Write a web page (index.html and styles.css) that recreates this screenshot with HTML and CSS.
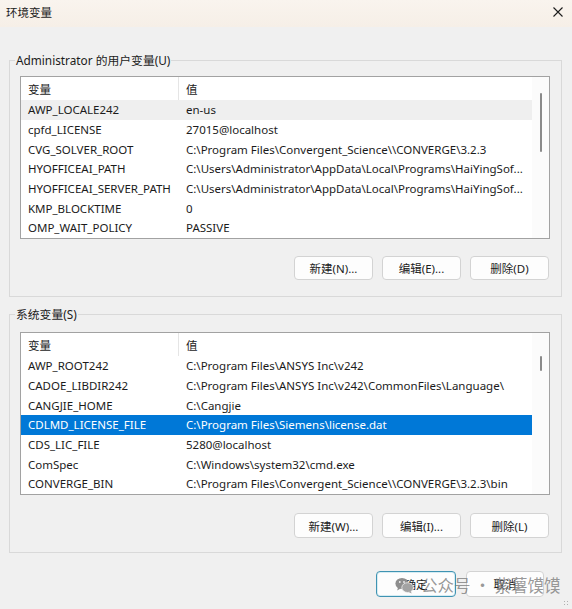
FILE: index.html
```html
<!DOCTYPE html>
<html lang="zh-CN">
<head>
<meta charset="utf-8">
<title>环境变量</title>
<link rel="stylesheet" href="styles.css">
</head>
<body>
<div class="window">
  <div class="titlebar">
    <span class="title">环境变量</span>
    <svg class="close" width="10" height="10" viewBox="0 0 10 10"><path d="M0.5 0.5 L9.5 9.5 M9.5 0.5 L0.5 9.5" stroke="#1c1c1c" stroke-width="1.1" fill="none"/></svg>
  </div>
  <div class="content">
    <fieldset class="group group-user">
      <legend>Administrator 的用户变量(U)</legend>
      <div class="list">
        <div class="list-main">
          <div class="row head"><div class="c1">变量</div><div class="c2">值</div></div>
          <div class="row hover"><div class="c1">AWP_LOCALE242</div><div class="c2">en-us</div></div>
          <div class="row"><div class="c1">cpfd_LICENSE</div><div class="c2">27015@localhost</div></div>
          <div class="row"><div class="c1">CVG_SOLVER_ROOT</div><div class="c2">C:\Program Files\Convergent_Science\\CONVERGE\3.2.3</div></div>
          <div class="row"><div class="c1">HYOFFICEAI_PATH</div><div class="c2">C:\Users\Administrator\AppData\Local\Programs\HaiYingSof...</div></div>
          <div class="row"><div class="c1">HYOFFICEAI_SERVER_PATH</div><div class="c2">C:\Users\Administrator\AppData\Local\Programs\HaiYingSof...</div></div>
          <div class="row"><div class="c1">KMP_BLOCKTIME</div><div class="c2">0</div></div>
          <div class="row"><div class="c1">OMP_WAIT_POLICY</div><div class="c2">PASSIVE</div></div>
        </div>
        <div class="scroll"><div class="thumb thumb-user"></div></div>
      </div>
      <div class="btns">
        <button class="btn">新建(N)...</button>
        <button class="btn">编辑(E)...</button>
        <button class="btn">删除(D)</button>
      </div>
    </fieldset>

    <fieldset class="group group-sys">
      <legend>系统变量(S)</legend>
      <div class="list">
        <div class="list-main">
          <div class="row head"><div class="c1">变量</div><div class="c2">值</div></div>
          <div class="row"><div class="c1">AWP_ROOT242</div><div class="c2">C:\Program Files\ANSYS Inc\v242</div></div>
          <div class="row"><div class="c1">CADOE_LIBDIR242</div><div class="c2">C:\Program Files\ANSYS Inc\v242\CommonFiles\Language\</div></div>
          <div class="row"><div class="c1">CANGJIE_HOME</div><div class="c2">C:\Cangjie</div></div>
          <div class="row selected"><div class="c1">CDLMD_LICENSE_FILE</div><div class="c2">C:\Program Files\Siemens\license.dat</div></div>
          <div class="row"><div class="c1">CDS_LIC_FILE</div><div class="c2">5280@localhost</div></div>
          <div class="row"><div class="c1">ComSpec</div><div class="c2">C:\Windows\system32\cmd.exe</div></div>
          <div class="row"><div class="c1">CONVERGE_BIN</div><div class="c2">C:\Program Files\Convergent_Science\\CONVERGE\3.2.3\bin</div></div>
        </div>
        <div class="scroll"><div class="thumb thumb-sys"></div></div>
      </div>
      <div class="btns">
        <button class="btn">新建(W)...</button>
        <button class="btn">编辑(I)...</button>
        <button class="btn">删除(L)</button>
      </div>
    </fieldset>

    <div class="footer">
      <button class="btn btn-ok">确定</button>
      <button class="btn btn-cancel">取消</button>
    </div>
  </div>

  <div class="watermark">
    <svg class="wm-icon" width="19" height="17" viewBox="0 0 19 17">
      <ellipse cx="7" cy="6.5" rx="6.6" ry="5.6" fill="#8e8e8e"/>
      <path d="M3 10.5 L2.2 13.5 L5.6 11.6 Z" fill="#8e8e8e"/>
      <ellipse cx="12.6" cy="10.6" rx="5.8" ry="4.9" fill="#a3a3a3" stroke="#f0f0f0" stroke-width="0.8"/>
      <path d="M15.8 14 L16.6 16.4 L13.6 15 Z" fill="#a3a3a3"/>
      <circle cx="4.8" cy="5" r="0.9" fill="#f0f0f0"/>
      <circle cx="9" cy="5" r="0.9" fill="#f0f0f0"/>
    </svg>
    <span class="wm-text">公众号 · 紫薯馍馍</span>
  </div>
  <div class="grip"></div>
</div>
</body>
</html>
```

FILE: styles.css
```css
* { box-sizing: border-box; }

html, body {
  margin: 0;
  padding: 0;
}

body {
  width: 572px;
  height: 609px;
  overflow: hidden;
  background: #f0f0f0;
  font-family: "Noto Sans", "Noto Sans CJK SC", sans-serif;
  font-size: 11.5px;
  color: #1b1b1b;
}

.window {
  position: relative;
  width: 572px;
  height: 609px;
  background: #f0f0f0;
}

.titlebar {
  height: 27px;
  display: flex;
  align-items: center;
  justify-content: space-between;
  padding: 0 9px 3px 6px;
  background: linear-gradient(180deg, #f9f4ee 0%, #f6efe7 100%);
}

.title {
  font-family: "Noto Sans CJK SC", sans-serif;
  font-size: 11.5px;
  color: #1b1b1b;
}

.close {
  display: block;
}

.content {
  padding: 25px 10px 0 9px;
}

.group {
  margin: 0;
  padding: 8px 11px 16px 10px;
  border: 1px solid #d9d9d9;
  width: 553px;
  min-width: 0;
}

.group legend {
  margin-left: -5px;
  padding: 0 1px;
  line-height: 16px;
  font-size: 11.8px;
  color: #1b1b1b;
}

.group-sys {
  margin-top: 9px;
  padding-top: 10px;
  padding-bottom: 14px;
}

.list {
  display: flex;
  border: 1px solid #a2a2a2;
  background: #ffffff;
  height: 163px;
}

.list-main {
  flex: 1;
  min-width: 0;
}

.row {
  display: flex;
  height: 19.7px;
  align-items: center;
  white-space: nowrap;
}

.row.head {
  height: 23px;
}

.row .c1 {
  width: 158px;
  padding-left: 7px;
  overflow: hidden;
}

.row .c2 {
  flex: 1;
  padding-left: 7px;
  overflow: hidden;
}

.row.head .c1 {
  border-right: 1px solid #e5e5e5;
  height: 100%;
  display: flex;
  align-items: center;
}

.row.head .c1,
.row.head .c2 {
  font-family: "Noto Sans CJK SC", sans-serif;
}

.row.hover {
  background: #efefef;
}

.row.selected {
  background: #0078d7;
  color: #ffffff;
}

.scroll {
  width: 17px;
  background: #fbfbfb;
  display: flex;
  flex-direction: column;
  align-items: center;
}

.thumb {
  width: 2px;
  background: #8a8a8a;
  border-radius: 1px;
}

.thumb-user {
  margin-top: 16px;
  height: 59px;
}

.thumb-sys {
  margin-top: 23px;
  height: 15px;
}

.btns {
  display: flex;
  justify-content: flex-end;
  gap: 9px;
  margin-top: 17px;
  padding-right: 1px;
}

.btn {
  width: 79px;
  height: 24px;
  padding: 0;
  border: 1px solid #d3d3d3;
  border-radius: 4px;
  background: #fdfdfd;
  font-family: "Noto Sans", "Noto Sans CJK SC", sans-serif;
  font-size: 11.5px;
  color: #1b1b1b;
}

.group-sys .btns {
  margin-top: 18px;
}

.group-sys .btns .btn {
  height: 25px;
}

.footer {
  display: flex;
  justify-content: flex-end;
  gap: 10px;
  margin-top: 18px;
  padding-right: 18px;
}

.btn-ok {
  width: 80px;
  height: 26px;
  border: 1px solid #3f93b2;
  box-shadow: inset 0 0 0 1px #d6ecf3;
}

.btn-cancel {
  width: 78px;
  height: 26px;
}

.watermark {
  position: absolute;
  left: 395px;
  top: 574px;
  display: flex;
  align-items: center;
  gap: 7px;
  white-space: nowrap;
  pointer-events: none;
}

.wm-text {
  font-family: "Noto Sans CJK SC", sans-serif;
  font-size: 16.5px;
  color: rgba(125, 125, 125, 0.8);
  line-height: 22px;
}

.grip {
  position: absolute;
  right: 3px;
  bottom: 3px;
  width: 6px;
  height: 6px;
  background: radial-gradient(circle, #b0b0b0 0.8px, transparent 1px) 0 0 / 3px 3px;
}
```
